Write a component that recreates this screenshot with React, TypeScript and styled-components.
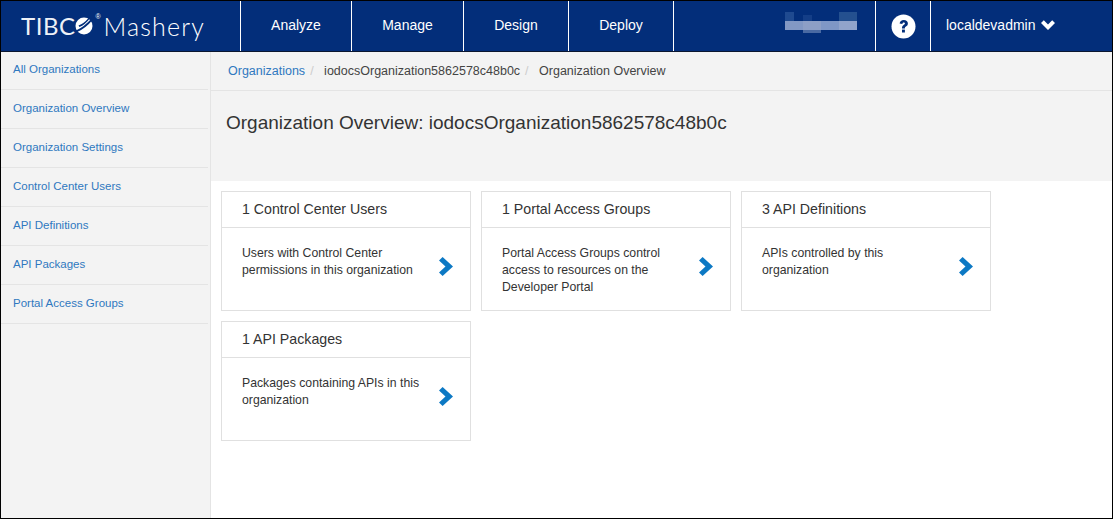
import React from "react";
import styled, { createGlobalStyle } from "styled-components";

const GlobalStyle = createGlobalStyle`
  html, body {
    margin: 0;
    padding: 0;
    background: #fff;
  }
  * {
    box-sizing: border-box;
  }
`;

const NAV_ITEMS = [
  { label: "Analyze", width: 111 },
  { label: "Manage", width: 112 },
  { label: "Design", width: 105 },
  { label: "Deploy", width: 105 },
];

const SIDE_ITEMS = [
  "All Organizations",
  "Organization Overview",
  "Organization Settings",
  "Control Center Users",
  "API Definitions",
  "API Packages",
  "Portal Access Groups",
];

const CARDS = [
  {
    title: "1 Control Center Users",
    body: "Users with Control Center permissions in this organization",
  },
  {
    title: "1 Portal Access Groups",
    body: "Portal Access Groups control access to resources on the Developer Portal",
  },
  {
    title: "3 API Definitions",
    body: "APIs controlled by this organization",
  },
  {
    title: "1 API Packages",
    body: "Packages containing APIs in this organization",
  },
];

const LogoMark = () => (
  <svg width="18" height="18" viewBox="0 0 18 18" aria-hidden="true">
    <circle cx="9" cy="9" r="8.5" fill="#fff" />
    <path d="M1 13.5 Q9 10 16.5 1.5 L17.5 3 Q11 11 2.2 15 Z" fill="#032e7a" />
    <path d="M3.5 8.5 Q9 6.5 13.5 1 L14.8 1.6 Q10 8 4.4 10 Z" fill="#032e7a" />
  </svg>
);

const Redacted = () => (
  <svg width="72" height="25" viewBox="0 0 72 25" aria-hidden="true">
    <rect x="0" y="0" width="9" height="9" fill="#1f4a90" />
    <rect x="54" y="0" width="18" height="9" fill="#24508f" />
    <rect x="18" y="3" width="9" height="6" fill="#143e87" />
    <rect x="0" y="9" width="72" height="9" fill="#8298c4" />
    <rect x="18" y="9" width="18" height="9" fill="#8d9fc6" />
    <rect x="36" y="9" width="18" height="9" fill="#7f97c6" />
    <rect x="54" y="9" width="18" height="9" fill="#91a4cb" />
    <rect x="18" y="18" width="18" height="3" fill="#4a6aa3" />
  </svg>
);

const HelpIcon = () => (
  <svg width="25" height="25" viewBox="0 0 25 25" aria-hidden="true">
    <circle cx="12.5" cy="12.5" r="12" fill="#fff" />
    <path
      d="M8.6 9.6 C8.9 7.3 10.5 6 12.8 6 C15.2 6 16.9 7.4 16.9 9.4 C16.9 11 16 11.8 14.9 12.5 C14 13.1 13.9 13.5 13.9 14.4 L11 14.4 C11 12.8 11.3 12 12.6 11.1 C13.5 10.5 13.9 10.2 13.9 9.6 C13.9 9 13.4 8.6 12.7 8.6 C12 8.6 11.5 9.1 11.4 10 Z"
      fill="#032e7a"
    />
    <rect x="11" y="15.6" width="2.9" height="2.9" fill="#032e7a" />
  </svg>
);

const ChevronDown = () => (
  <svg width="14" height="10" viewBox="0 0 14 10" aria-hidden="true">
    <path d="M0 3 L2.8 0.2 L7 4.4 L11.2 0.2 L14 3 L7 10 Z" fill="#fff" />
  </svg>
);

const ChevronRight = () => (
  <svg width="14" height="19" viewBox="0 0 14 19" aria-hidden="true">
    <path d="M3.6 0 L14 9.5 L3.6 19 L0 15.4 L6.5 9.5 L0 3.6 Z" fill="#0d79c4" />
  </svg>
);

export default function App() {
  return (
    <>
      <GlobalStyle />
      <Frame>
        <Header>
          <Logo>
            <LogoWord>TIBC</LogoWord>
            <LogoMark />
            <LogoReg>®</LogoReg>
            <LogoName>Mashery</LogoName>
          </Logo>
          <Nav>
            {NAV_ITEMS.map((item) => (
              <NavItem key={item.label} $width={item.width}>
                {item.label}
              </NavItem>
            ))}
          </Nav>
          <HeaderRight>
            <RedactedSlot>
              <Redacted />
            </RedactedSlot>
            <HelpSlot>
              <HelpIcon />
            </HelpSlot>
            <UserMenu>
              localdevadmin
              <ChevronDown />
            </UserMenu>
          </HeaderRight>
        </Header>
        <Body>
          <Sidebar>
            {SIDE_ITEMS.map((item) => (
              <SideItem key={item}>{item}</SideItem>
            ))}
          </Sidebar>
          <Main>
            <Breadcrumbs>
              <CrumbLink>Organizations</CrumbLink>
              <CrumbSep>/</CrumbSep>
              <Crumb>iodocsOrganization5862578c48b0c</Crumb>
              <CrumbSep>/</CrumbSep>
              <Crumb>Organization Overview</Crumb>
            </Breadcrumbs>
            <TitleBand>
              <Title>Organization Overview: iodocsOrganization5862578c48b0c</Title>
            </TitleBand>
            <CardGrid>
              {CARDS.map((card) => (
                <Card key={card.title}>
                  <CardTitle>{card.title}</CardTitle>
                  <CardBody>
                    <CardText>{card.body}</CardText>
                    <CardArrow>
                      <ChevronRight />
                    </CardArrow>
                  </CardBody>
                </Card>
              ))}
            </CardGrid>
          </Main>
        </Body>
      </Frame>
    </>
  );
}

const Frame = styled.div`
  width: 1113px;
  height: 519px;
  display: flex;
  flex-direction: column;
  border: 1px solid #000;
  overflow: hidden;
  font-family: "Liberation Sans", Arial, sans-serif;
`;

const Header = styled.header`
  flex: 0 0 51px;
  display: flex;
  background: #032e7a;
  border-bottom: 1px solid #0b1730;
  color: #fff;
`;

const Logo = styled.div`
  width: 239px;
  display: flex;
  align-items: center;
  padding-left: 20px;
`;

const LogoWord = styled.span`
  font-family: Lato, sans-serif;
  font-weight: 400;
  font-size: 24px;
  letter-spacing: 0.5px;
  line-height: 50px;
  color: #eef1f7;
`;

const LogoName = styled(LogoWord)`
  font-weight: 300;
  font-size: 25px;
  letter-spacing: 1.2px;
  color: #fff;
`;

const LogoReg = styled.span`
  align-self: flex-start;
  width: 8px;
  margin: 12px 0 0 2px;
  font-size: 7px;
  line-height: 8px;
`;

const Nav = styled.nav`
  display: flex;
  border-left: 1px solid #fff;
`;

const NavItem = styled.div<{ $width: number }>`
  width: ${(p) => p.$width}px;
  display: flex;
  align-items: center;
  justify-content: center;
  padding-bottom: 2px;
  border-right: 1px solid #fff;
  font-size: 14px;
`;

const HeaderRight = styled.div`
  margin-left: auto;
  display: flex;
`;

const RedactedSlot = styled.div`
  width: 93px;
  padding: 11px 0 0 2px;
  border-right: 1px solid #fff;
`;

const HelpSlot = styled.div`
  width: 55px;
  display: flex;
  align-items: center;
  justify-content: center;
  border-right: 1px solid #fff;
`;

const UserMenu = styled.div`
  width: 181px;
  display: flex;
  align-items: center;
  gap: 5px;
  padding: 0 0 3px 15px;
  font-size: 14px;
`;

const Body = styled.div`
  flex: 1;
  display: flex;
  min-height: 0;
`;

const Sidebar = styled.aside`
  flex: 0 0 210px;
  background: #f3f3f3;
  border-right: 1px solid #e4e4e4;
  padding-right: 2px;
`;

const SideItem = styled.div`
  height: 39px;
  padding: 10px 0 0 12px;
  border-bottom: 1px solid #e4e4e4;
  font-size: 11.5px;
  line-height: 16px;
  color: #2f78bf;

  &:first-child {
    height: 38px;
    padding-top: 9px;
  }
`;

const Main = styled.main`
  flex: 1;
  min-width: 0;
`;

const Breadcrumbs = styled.div`
  height: 39px;
  display: flex;
  align-items: center;
  padding-left: 17px;
  background: #f3f3f3;
  border-bottom: 1px solid #e4e4e4;
  font-size: 12.5px;
`;

const CrumbLink = styled.span`
  color: #2f78bf;
`;

const Crumb = styled.span`
  color: #444;
`;

const CrumbSep = styled.span`
  margin: 0 10.5px 0 5px;
  color: #ccc;
`;

const TitleBand = styled.div`
  height: 90px;
  padding: 20px 15px 0;
  background: #f3f3f3;
`;

const Title = styled.h1`
  margin: 0;
  font-size: 19px;
  font-weight: 400;
  line-height: 24px;
  color: #333;
`;

const CardGrid = styled.div`
  display: grid;
  grid-template-columns: repeat(3, 250px);
  grid-auto-rows: 120px;
  gap: 10px;
  padding: 10px;
`;

const Card = styled.section`
  display: flex;
  flex-direction: column;
  border: 1px solid #e0e0e0;
  background: #fff;
`;

const CardTitle = styled.h2`
  flex: 0 0 36px;
  margin: 0;
  padding: 0 20px;
  border-bottom: 1px solid #e0e0e0;
  font-size: 14.2px;
  font-weight: 400;
  line-height: 34px;
  color: #333;
`;

const CardBody = styled.div`
  flex: 1;
  display: flex;
  padding: 17px 15px 0 20px;
`;

const CardText = styled.p`
  flex: 1;
  margin: 0;
  font-size: 12.25px;
  line-height: 17px;
  color: #333;
`;

const CardArrow = styled.div`
  flex: 0 0 16px;
  margin: 12px 0 0 16px;
`;
